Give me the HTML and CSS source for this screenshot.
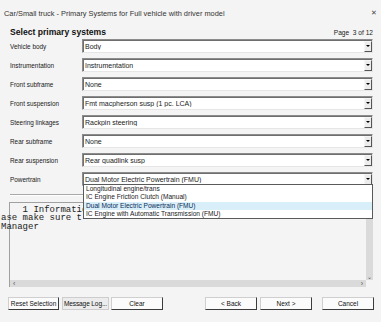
FILE: index.html
```html
<!DOCTYPE html>
<html lang="en">
<head>
    <meta charset="UTF-8">
    <meta name="viewport" content="width=device-width, initial-scale=1.0">
    <title>Primary Systems</title>
    <link rel="stylesheet" href="styles.css">
</head>
<body>
    <div class="titlebar">
        <span class="title">Car/Small truck - Primary Systems for Full vehicle with driver model</span>
        <span class="grip"></span>
        <span class="close">✕</span>
    </div>

    <div class="heading">
        <h1>Select primary systems</h1>
        <span class="page">Page&nbsp; 3 of 12</span>
    </div>

    <div class="form">
        <label>Vehicle body</label>
        <div class="select"><span class="value">Body</span><span class="arrow"></span></div>

        <label>Instrumentation</label>
        <div class="select"><span class="value">Instrumentation</span><span class="arrow"></span></div>

        <label>Front subframe</label>
        <div class="select"><span class="value">None</span><span class="arrow"></span></div>

        <label>Front suspension</label>
        <div class="select"><span class="value">Fmt macpherson susp (1 pc. LCA)</span><span class="arrow"></span></div>

        <label>Steering linkages</label>
        <div class="select"><span class="value">Rackpin steering</span><span class="arrow"></span></div>

        <label>Rear subframe</label>
        <div class="select"><span class="value">None</span><span class="arrow"></span></div>

        <label>Rear suspension</label>
        <div class="select"><span class="value">Rear quadlink susp</span><span class="arrow"></span></div>

        <label>Powertrain</label>
        <div class="select open">
            <span class="value">Dual Motor Electric Powertrain (FMU)</span><span class="arrow"></span>
            <ul class="list">
                <li>Longitudinal engine/trans</li>
                <li>IC Engine Friction Clutch (Manual)</li>
                <li class="active">Dual Motor Electric Powertrain (FMU)</li>
                <li>IC Engine with Automatic Transmission (FMU)</li>
            </ul>
        </div>
    </div>

    <div class="separator"></div>

    <div class="log">
        <div class="log-main">
            <pre class="log-text">    1 Informatio
ase make sure t
Manager</pre>
            <div class="vscroll"><span>⌄</span></div>
        </div>
        <div class="log-bottom">
            <div class="hscroll"><span>‹</span><span>›</span></div>
            <div class="corner"></div>
        </div>
    </div>

    <div class="buttons">
        <button class="w-reset">Reset Selection</button>
        <button class="flat w-log">Message Log...</button>
        <button class="w-clear">Clear</button>
        <span class="spacer"></span>
        <button class="w-back">&lt; Back</button>
        <button class="w-next">Next &gt;</button>
        <button class="w-cancel">Cancel</button>
    </div>
</body>
</html>
```

FILE: styles.css
```css
body {
    margin: 0;
    padding: 0 8px 0 10px;
    background: #f4f4f4;
    font-family: "Liberation Sans", Arial, sans-serif;
    font-size: 6.4px;
    color: #1a1a1a;
    width: 363px;
    height: 322px;
    overflow: hidden;
}
.titlebar {
    height: 26px;
    display: flex;
    align-items: center;
    margin-left: -6px;
    margin-right: -8px;
}
.title {
    font-size: 7.4px;
    color: #333;
    white-space: nowrap;
}
.grip {
    flex: 1;
    height: 4px;
    margin: 1px 6px 0 6px;
    background-image: radial-gradient(circle, #9a9a9a 0.55px, transparent 0.7px);
    background-size: 2px 2px;
}
.close {
    font-size: 7px;
    color: #444;
    margin-right: 4px;
}
.heading {
    display: flex;
    justify-content: space-between;
    align-items: center;
    height: 12px;
}
h1 {
    margin: 0;
    font-size: 8.6px;
    font-weight: bold;
    color: #111;
}
.page {
    font-size: 6.6px;
    margin-right: 0;
}
.form {
    display: grid;
    grid-template-columns: 72px 1fr;
    grid-auto-rows: 14px;
    row-gap: 5px;
    margin-top: 1px;
    align-items: center;
}
.select {
    position: relative;
    height: 14px;
    box-sizing: border-box;
    display: flex;
    align-items: center;
    background: #fff;
    border: 1px solid;
    border-color: #8c8c8c #e6e6e6 #e6e6e6 #8c8c8c;
    box-shadow: inset 1px 1px 0 #6e6e6e;
}
.value {
    flex: 1;
    padding-left: 2px;
    font-size: 7px;
    white-space: nowrap;
    overflow: hidden;
}
.arrow {
    width: 8px;
    height: 11px;
    box-sizing: border-box;
    border: 1px solid;
    border-color: #f6f6f6 #555 #555 #f6f6f6;
    background: #ececec;
    display: flex;
    align-items: center;
    justify-content: center;
}
.arrow::after {
    content: "";
    border-left: 2px solid transparent;
    border-right: 2px solid transparent;
    border-top: 2.5px solid #000;
}
.list {
    position: absolute;
    top: 11px;
    left: 0;
    right: -1px;
    margin: 0;
    padding: 0;
    list-style: none;
    background: #fff;
    border: 1px solid #5a5a5a;
    z-index: 2;
}
.list li {
    height: 8.25px;
    line-height: 8.25px;
    padding-left: 2px;
    font-size: 6.6px;
    white-space: nowrap;
}
.list li.active {
    background: #d8effa;
    color: #0a2a55;
}
.separator {
    margin-top: 8px;
    border-top: 1px solid #a8a8a8;
    border-bottom: 1px solid #fff;
}
.log {
    margin-top: 6px;
    margin-left: -1px;
    height: 85px;
    display: flex;
    flex-direction: column;
    border-top: 1px solid #a0a0a0;
    border-left: 1px solid #a0a0a0;
    box-sizing: border-box;
}
.log-main {
    flex: 1;
    display: flex;
}
.log-text {
    flex: 1;
    margin: 3px 0 0 -9px;
    font-family: "Liberation Mono", "Courier New", monospace;
    font-size: 9px;
    line-height: 8.3px;
    color: #222;
    white-space: pre;
}
.vscroll {
    width: 7px;
    background: #dadada;
    display: flex;
    align-items: flex-end;
    justify-content: center;
    font-size: 6px;
    color: #555;
    line-height: 6px;
}
.log-bottom {
    height: 7px;
    display: flex;
}
.hscroll {
    flex: 1;
    background: #dadada;
    display: flex;
    justify-content: space-between;
    align-items: center;
    padding: 0 3px;
    font-size: 7px;
    color: #555;
}
.corner {
    width: 7px;
}
.buttons {
    display: flex;
    margin-top: 10px;
    margin-left: -2px;
    margin-right: -1px;
}
button {
    height: 13px;
    box-sizing: border-box;
    padding: 0;
    font-family: "Liberation Sans", Arial, sans-serif;
    font-size: 6.5px;
    color: #111;
    white-space: nowrap;
    overflow: hidden;
    background: #fbfbfb;
    border: 1px solid;
    border-color: #cfcfcf #3c3c3c #3c3c3c #cfcfcf;
    margin-right: 3px;
}
button.flat {
    background: #ececec;
    border-color: #cdcdcd;
    margin-right: 2px;
    letter-spacing: -0.1px;
}
.w-reset { width: 51px; }
.w-log { width: 47px; }
.w-clear { width: 52px; }
.w-back { width: 52px; }
.w-next { width: 52px; margin-right: 10px; }
.w-cancel { width: 52px; margin-right: 0; }
.spacer { flex: 1; }
```
